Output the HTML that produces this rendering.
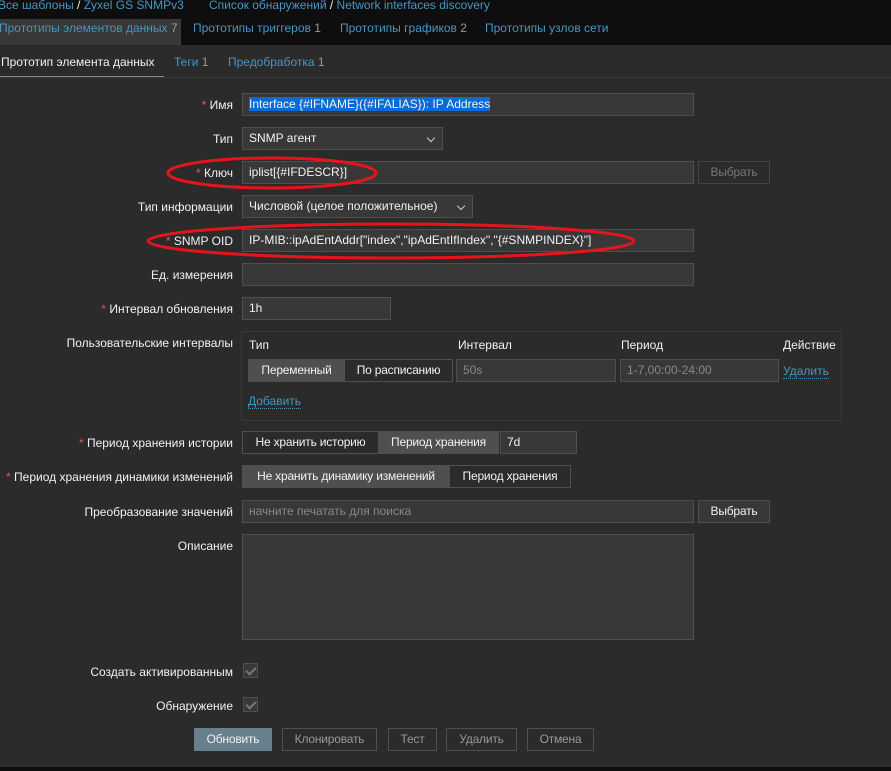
<!DOCTYPE html>
<html><head><meta charset="utf-8"><style>
*{box-sizing:border-box;margin:0;padding:0}
body{width:891px;height:771px;overflow:hidden;background:#2b2b2b;font-family:"Liberation Sans",Arial,sans-serif;font-size:12px;color:#f2f2f2;position:relative}
.a{position:absolute;white-space:nowrap}
.lbl{position:absolute;right:658px;white-space:nowrap;text-align:right}
.r{color:#e45959}
.in{position:absolute;background:#383838;border:1px solid #4f4f4f;padding:0 6px;line-height:21px;height:23px;white-space:nowrap;overflow:hidden}
.btn{position:absolute;border:1px solid #4f4f4f;height:23px;line-height:21px;text-align:center;white-space:nowrap;letter-spacing:-0.2px}
.lnk{color:#4796c4}
.chev{position:absolute;right:8px;top:7px;width:6px;height:6px;border-right:1px solid #ccc;border-bottom:1px solid #ccc;transform:rotate(45deg)}
.cb{position:absolute;width:15px;height:15px;background:#383838;border:1px solid #4f4f4f}
.cb:after{content:"";position:absolute;left:4px;top:1px;width:4px;height:8px;border-right:2px solid #6e7a82;border-bottom:2px solid #6e7a82;transform:rotate(45deg)}
</style></head><body>
<div class="a" style="left:0;top:0;width:891px;height:45px;background:#0e0e0e"></div>
<div class="a lnk" style="left:-2px;top:-2px">Все шаблоны <span style="color:#f2f2f2">/</span> Zyxel GS SNMPv3</div>
<div class="a lnk" style="left:209px;top:-2px">Список обнаружений <span style="color:#f2f2f2">/</span> Network interfaces discovery</div>
<div class="a" style="left:0;top:19px;width:181px;height:26px;background:#383838"></div>
<div class="a lnk" style="left:-1px;top:21px">Прототипы элементов данных <span style="color:#999">7</span></div>
<div class="a lnk" style="left:193px;top:21px">Прототипы триггеров <span style="color:#999">1</span></div>
<div class="a lnk" style="left:340px;top:21px">Прототипы графиков <span style="color:#999">2</span></div>
<div class="a lnk" style="left:485px;top:21px">Прототипы узлов сети</div>
<div class="a" style="left:1px;top:55px">Прототип элемента данных</div>
<div class="a lnk" style="left:174px;top:55px">Теги <span style="color:#999">1</span></div>
<div class="a lnk" style="left:228px;top:55px">Предобработка <span style="color:#999">1</span></div>
<div class="a" style="left:0;top:76px;width:164px;height:2px;background:#768d99"></div>
<div class="a" style="left:0;top:77px;width:891px;height:1px;background:#383838"></div>

<div class="lbl" style="top:98px"><span class="r">*</span> Имя</div>
<div class="in" style="left:242px;top:93px;width:452px"><span style="background:#0b6ad6">Interface {#IFNAME}({#IFALIAS}): IP Address</span></div>
<div class="lbl" style="top:132px">Тип</div>
<div class="in" style="left:242px;top:127px;width:201px">SNMP агент<i class="chev"></i></div>
<div class="lbl" style="top:166px"><span class="r">*</span> Ключ</div>
<div class="in" style="left:242px;top:161px;width:452px">iplist[{#IFDESCR}]</div>
<div class="btn" style="left:698px;top:161px;width:72px;color:#777;border-color:#444">Выбрать</div>
<div class="lbl" style="top:200px">Тип информации</div>
<div class="in" style="left:242px;top:195px;width:231px">Числовой (целое положительное)<i class="chev"></i></div>
<div class="lbl" style="top:234px"><span class="r">*</span> SNMP OID</div>
<div class="in" style="left:242px;top:229px;width:452px">IP-MIB::ipAdEntAddr["index","ipAdEntIfIndex","{#SNMPINDEX}"]</div>
<div class="lbl" style="top:268px">Ед. измерения</div>
<div class="in" style="left:242px;top:263px;width:452px"></div>
<div class="lbl" style="top:302px"><span class="r">*</span> Интервал обновления</div>
<div class="in" style="left:242px;top:297px;width:149px">1h</div>
<div class="lbl" style="top:336px">Пользовательские интервалы</div>
<div class="a" style="left:241px;top:331px;width:601px;height:90px;border:1px solid #383838"></div>
<div class="a" style="left:249px;top:338px">Тип</div>
<div class="a" style="left:458px;top:338px">Интервал</div>
<div class="a" style="left:621px;top:338px">Период</div>
<div class="a" style="left:783px;top:338px">Действие</div>
<div class="btn" style="left:248px;top:359px;width:97px;background:#4f4f4f">Переменный</div>
<div class="btn" style="left:344px;top:359px;width:109px">По расписанию</div>
<div class="in" style="left:456px;top:359px;width:160px;color:#888">50s</div>
<div class="in" style="left:620px;top:359px;width:159px;color:#888">1-7,00:00-24:00</div>
<div class="a lnk" style="left:783px;top:364px;border-bottom:1px dotted #4796c4">Удалить</div>
<div class="a lnk" style="left:248px;top:394px;border-bottom:1px dotted #4796c4">Добавить</div>
<div class="lbl" style="top:436px"><span class="r">*</span> Период хранения истории</div>
<div class="btn" style="left:242px;top:431px;width:137px">Не хранить историю</div>
<div class="btn" style="left:378px;top:431px;width:121px;background:#4f4f4f">Период хранения</div>
<div class="in" style="left:500px;top:431px;width:77px">7d</div>
<div class="lbl" style="top:470px"><span class="r">*</span> Период хранения динамики изменений</div>
<div class="btn" style="left:242px;top:465px;width:208px;background:#4f4f4f">Не хранить динамику изменений</div>
<div class="btn" style="left:449px;top:465px;width:122px">Период хранения</div>
<div class="lbl" style="top:505px">Преобразование значений</div>
<div class="in" style="left:242px;top:500px;width:452px;color:#888">начните печатать для поиска</div>
<div class="btn" style="left:698px;top:500px;width:72px;background:#383838">Выбрать</div>
<div class="lbl" style="top:539px">Описание</div>
<div class="in" style="left:242px;top:534px;width:452px;height:106px"></div>
<div class="lbl" style="top:665px">Создать активированным</div>
<div class="cb" style="left:243px;top:663px"></div>
<div class="lbl" style="top:699px">Обнаружение</div>
<div class="cb" style="left:243px;top:697px"></div>
<div class="btn" style="left:194px;top:728px;width:78px;background:#687f8c;border-color:#687f8c">Обновить</div>
<div class="btn" style="left:282px;top:728px;width:95px;color:#999">Клонировать</div>
<div class="btn" style="left:388px;top:728px;width:49px;color:#999">Тест</div>
<div class="btn" style="left:446px;top:728px;width:71px;color:#999">Удалить</div>
<div class="btn" style="left:527px;top:728px;width:67px;color:#999">Отмена</div>
<div class="a" style="left:0;top:767px;width:891px;height:4px;background:#0e0e0e"></div>
<svg class="a" style="left:0;top:0" width="891" height="771">
<ellipse cx="272" cy="173" rx="104" ry="15" fill="none" stroke="#e8141b" stroke-width="3"/>
<ellipse cx="391" cy="241" rx="243" ry="17" fill="none" stroke="#e8141b" stroke-width="3"/>
</svg>
</body></html>
